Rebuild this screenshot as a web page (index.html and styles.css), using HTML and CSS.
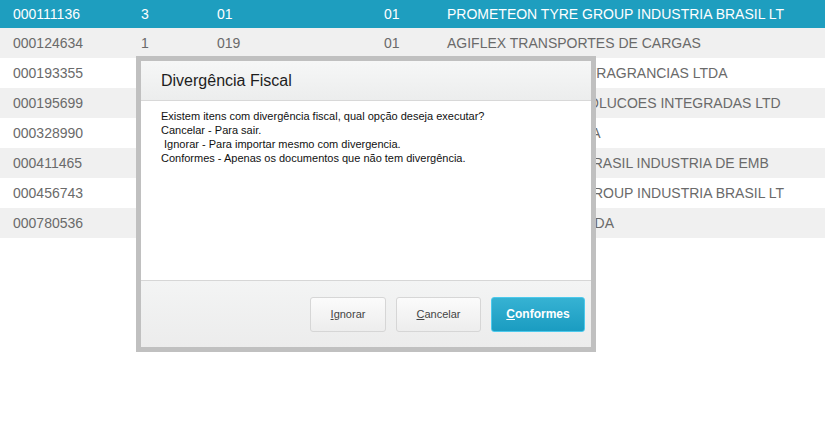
FILE: index.html
```html
<!DOCTYPE html>
<html lang="pt-BR">
<head>
<meta charset="utf-8">
<title>Divergência Fiscal</title>
<link rel="stylesheet" href="styles.css">
</head>
<body>
<div class="grid">
  <div class="row first selected"><span>000111136</span><span>3</span><span>01</span><span>01</span><span>PROMETEON TYRE GROUP INDUSTRIA BRASIL LT</span></div>
  <div class="row alt"><span>000124634</span><span>1</span><span>019</span><span>01</span><span>AGIFLEX TRANSPORTES DE CARGAS</span></div>
  <div class="row"><span>000193355</span><span></span><span></span><span></span><span>CRODA AROMAS DE FRAGRANCIAS LTDA</span></div>
  <div class="row alt"><span>000195699</span><span></span><span></span><span></span><span>PROTHEUS TOTVS SOLUCOES INTEGRADAS LTD</span></div>
  <div class="row"><span>000328990</span><span></span><span></span><span></span><span>VIACAO COMETA LTDA</span></div>
  <div class="row alt"><span>000411465</span><span></span><span></span><span></span><span>CARTONAGENS DO BRASIL INDUSTRIA DE EMB</span></div>
  <div class="row"><span>000456743</span><span></span><span></span><span></span><span>PROMETEON TYRE GROUP INDUSTRIA BRASIL LT</span></div>
  <div class="row alt"><span>000780536</span><span></span><span></span><span></span><span>PLASTICOS NOVAL LTDA</span></div>
</div>

<div class="dialog">
  <div class="dlg-header">Divergência Fiscal</div>
  <div class="dlg-body">
    <div>Existem itens com divergência fiscal, qual opção deseja executar?</div>
    <div>Cancelar - Para sair.</div>
    <div>&nbsp;Ignorar - Para importar mesmo com divergencia.</div>
    <div>Conformes - Apenas os documentos que não tem divergência.</div>
  </div>
  <div class="dlg-footer">
    <button class="btn btn-ignorar"><u>I</u>gnorar</button>
    <button class="btn btn-cancelar"><u>C</u>ancelar</button>
    <button class="btn btn-primary"><u>C</u>onformes</button>
  </div>
</div>
</body>
</html>
```
FILE: styles.css
```css
html, body {
  margin: 0;
  padding: 0;
  background: #ffffff;
}
body {
  font-family: "Liberation Sans", Arial, sans-serif;
  width: 825px;
  height: 424px;
  overflow: hidden;
  position: relative;
}
.grid {
  display: flex;
  flex-direction: column;
}
.row {
  display: grid;
  grid-template-columns: 128px 76px 167px 63px 1fr;
  height: 30px;
  align-items: center;
  font-size: 14px;
  color: #6a6a6a;
  background: #ffffff;
}
.row.first { height: 28px; }
.row.alt { background: #f0f0f0; }
.row.selected { background: #1e9ebf; color: #ffffff; }
.row span {
  padding-left: 13px;
  white-space: nowrap;
  overflow: hidden;
}
.dialog {
  position: absolute;
  left: 136px;
  top: 56px;
  width: 450px;
  border: 5px solid #c0c0c0;
  background: #ffffff;
  display: flex;
  flex-direction: column;
}
.dlg-header {
  box-sizing: border-box;
  height: 40px;
  border-bottom: 1px solid #d8d8d8;
  background: linear-gradient(#f6f7f7, #eceded);
  font-size: 16px;
  color: #1e1e1e;
  padding: 1px 0 0 20px;
  display: flex;
  align-items: center;
}
.dlg-body {
  height: 180px;
  box-sizing: border-box;
  padding: 8px 20px 0 20px;
  font-size: 11px;
  line-height: 14px;
  color: #111111;
  border-bottom: 1px solid #d6d6d6;
}
.dlg-footer {
  height: 66px;
  background: linear-gradient(#f3f4f4, #ececec);
  display: flex;
  justify-content: flex-end;
  align-items: center;
  gap: 10px;
  padding-right: 6px;
}
.btn {
  height: 35px;
  box-sizing: border-box;
  border: 1px solid #d6d6d6;
  border-radius: 3px;
  background: linear-gradient(#fbfbfb, #ededed);
  font-family: "Liberation Sans", Arial, sans-serif;
  font-size: 11px;
  color: #444444;
  padding: 0;
  margin: 0;
}
.btn-ignorar { width: 76px; }
.btn-cancelar { width: 85px; }
.btn-primary {
  width: 94px;
  border: 1px solid #4cc9ec;
  background: linear-gradient(#36b2d3, #1a9cc1);
  color: #ffffff;
  font-weight: bold;
  font-size: 12px;
}
```
